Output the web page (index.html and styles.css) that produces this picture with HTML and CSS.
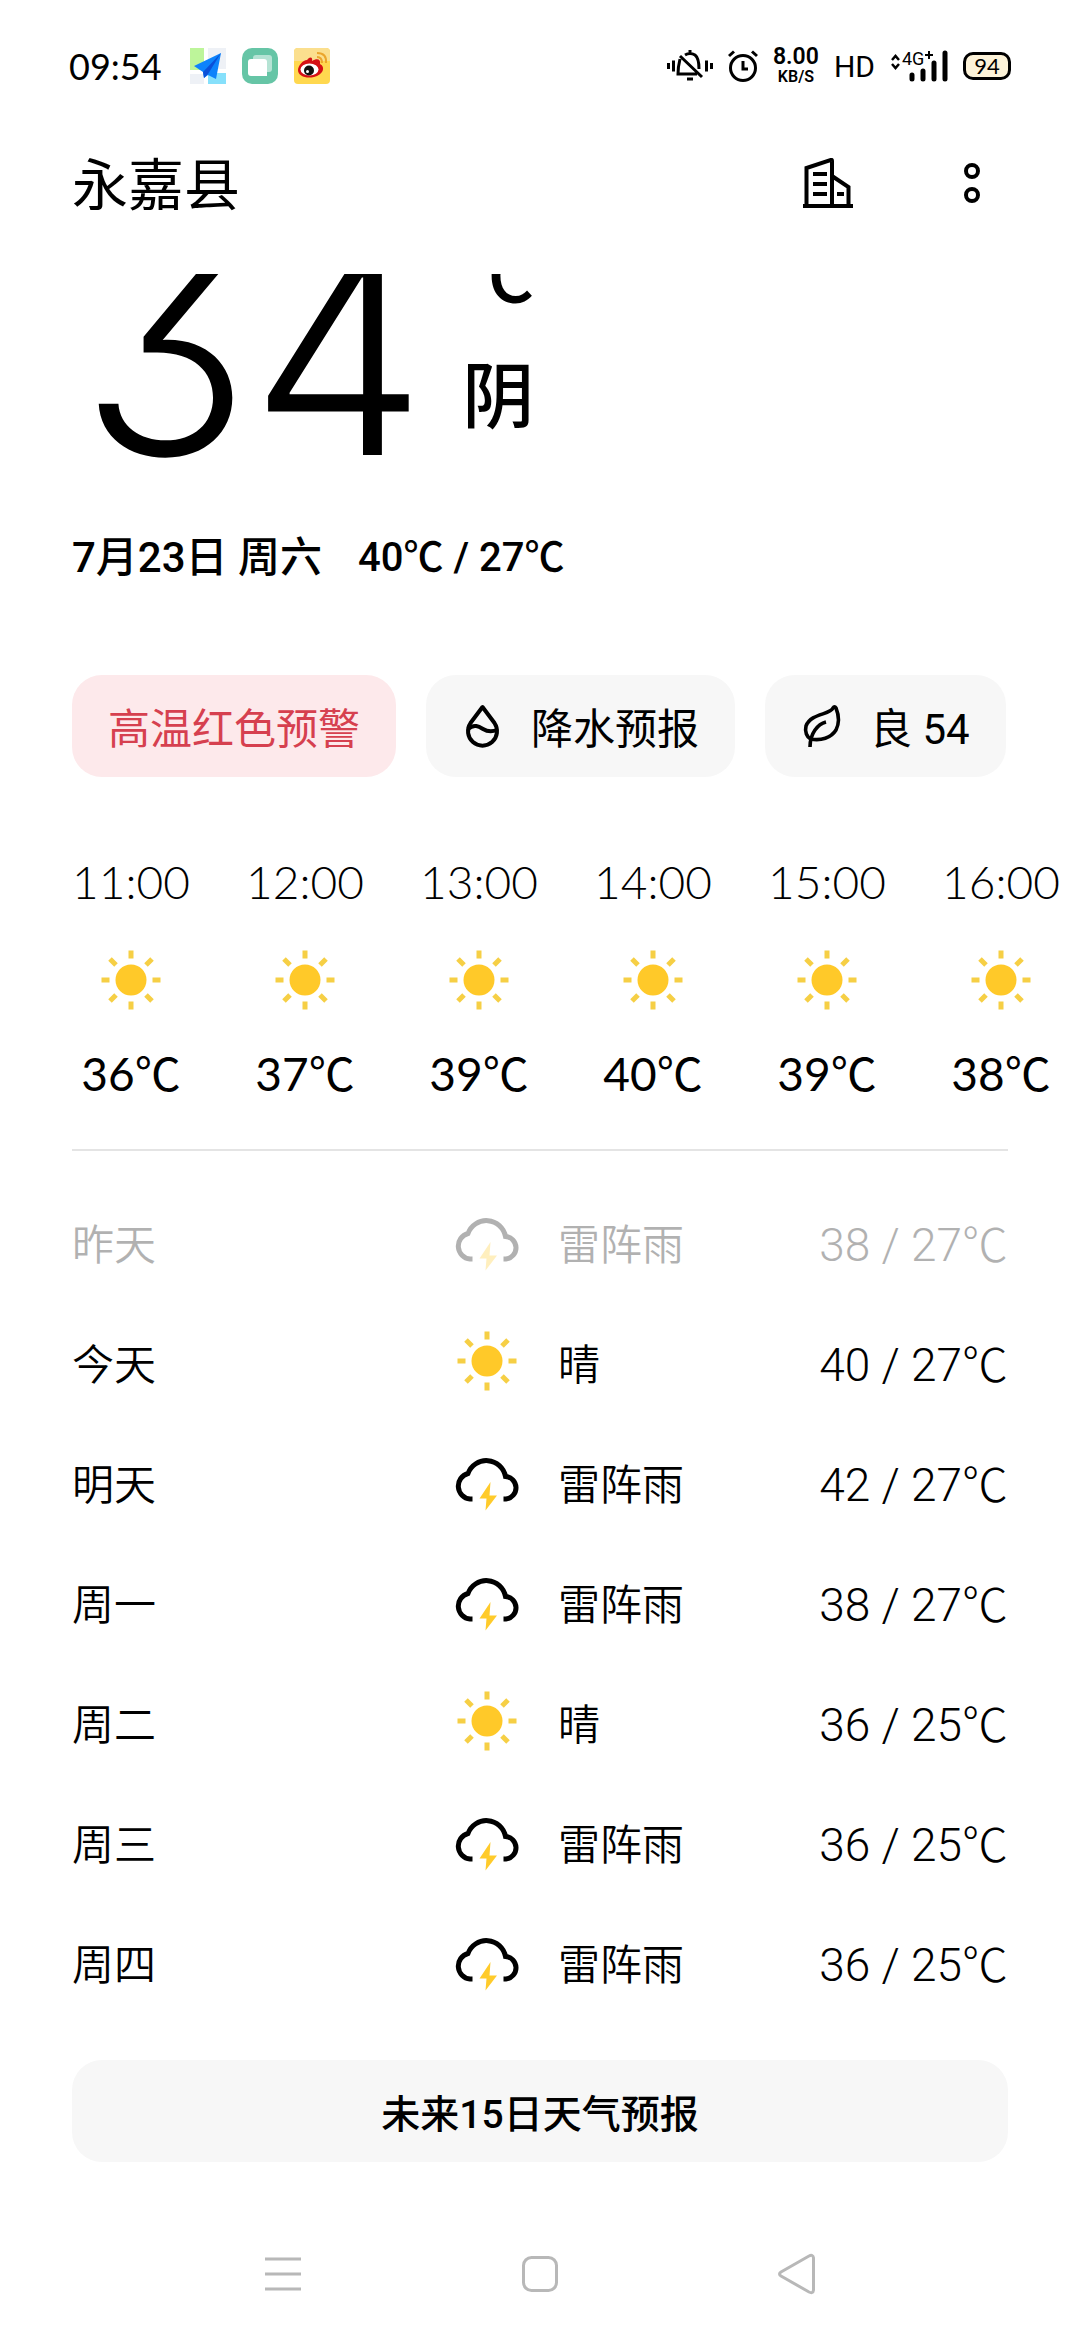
FILE: index.html
```html
<!DOCTYPE html>
<html lang="zh-CN">
<head>
  <meta charset="UTF-8">
  <meta name="viewport" content="width=device-width, initial-scale=1.0">
  <title>永嘉县 天气</title>
  <link rel="stylesheet" href="styles.css">
</head>
<body>
  <svg class="sprite" aria-hidden="true">
    <symbol id="sun" viewBox="0 0 60 60">
      <g stroke="#f6cf45" stroke-width="5">
        <path d="M30 0.5V8.5M30 51.5V59.5M0.5 30H8.5M51.5 30H59.5"/>
        <path d="M9 9L15 15M45 45L51 51M51 9L45 15M15 45L9 51"/>
      </g>
      <circle cx="30" cy="30" r="15.5" fill="#ffc929"/>
    </symbol>
    <symbol id="storm" viewBox="0 -4 66 60">
      <path d="M18.5 44H16A13 13 0 0 1 14 18.5A19.5 19.5 0 0 1 51.5 21.5A11.3 11.3 0 0 1 52 44H49.5" fill="none" stroke="currentColor" stroke-width="5"/>
      <path class="bolt" d="M36.5 27L25.5 43.5H32.5L31.5 55.5L43 40.5H35.5Z" fill="#ffcb2b"/>
    </symbol>
  </svg>

  <header class="status">
    <span class="clock">09:54</span>
    <div class="apps">
      <svg viewBox="0 0 36 36" width="36" height="36">
        <path d="M0 0H14V22H0Z" fill="#bdf59a"/>
        <path d="M18 0H36V21H18ZM0 26H14V36H0Z" fill="#eef1f6"/>
        <path d="M18 25H36V36H18Z" fill="#86e0fb"/>
        <path d="M31 5L4 18L13 24L14 30L18 27L26 31Z" fill="#0d83fb"/>
        <path d="M31 5L13 24L14 30L18 26Z" fill="#0a50d8"/>
      </svg>
      <svg viewBox="0 0 36 36" width="36" height="36">
        <rect width="36" height="36" rx="10" fill="#66c5a6"/>
        <rect x="11" y="7" width="19" height="17" rx="3" fill="#b5e3d4"/>
        <path d="M9 11H22Q25 11 25 14V28H9Q6 28 6 25V14Q6 11 9 11Z" fill="#fff"/>
      </svg>
      <svg viewBox="0 0 36 36" width="36" height="36">
        <rect width="36" height="36" rx="4" fill="#ffd84f"/>
        <path d="M4 0H32Q36 0 36 4V13H0V4Q0 0 4 0Z" fill="#fbdf8e"/>
        <path d="M13 12C16 8 19 9 18 13C23 10 27 11 26 16C32 19 29 27 20 29C12 31 4 28 4 22C4 18 9 12 13 12Z" fill="#d51015"/>
        <ellipse cx="15.500" cy="21.500" rx="9" ry="6" fill="#fff"/>
        <circle cx="15" cy="22.500" r="5" fill="#111"/>
        <circle cx="13.500" cy="23.500" r="1.500" fill="#fff"/>
        <path d="M23 9Q28 9 28 15M23 5Q33 5 32 15" fill="none" stroke="#eba52c" stroke-width="2"/>
      </svg>
    </div>
    <div class="system">
      <svg viewBox="0 0 46 32" width="46" height="32" fill="none" stroke="#000" stroke-width="3">
        <path d="M1.5 13V19M6.500 10.500V21.500M39.500 10.500V21.500M44.500 13V19"/>
        <path d="M13 9Q11 17 11 24H30M18 5Q23 2 28 5Q32 8 32 19M23 0V4M13 6L35 27"/>
        <path d="M20 29H26"/>
      </svg>
      <svg viewBox="0 0 30 32" width="30" height="32" fill="none" stroke="#000" stroke-width="3">
        <circle cx="15" cy="18" r="12.500"/>
        <path d="M15 11V19H20M1 6L6 1.500M29 6L24 1.500"/>
      </svg>
      <div class="speed"><span>8.00</span><small>KB/S</small></div>
      <span class="hd">HD</span>
      <div class="signal">
        <svg viewBox="0 0 58 32" width="58" height="32">
          <path d="M2 10L5.500 6L9 10M2 14L5.500 18L9 14" fill="none" stroke="#000" stroke-width="2.500"/>
          <path d="M39 1V9M35 5H43" stroke="#000" stroke-width="2"/>
          <path d="M22 25V29M33 21V29M44 13V29M55 3V29" stroke="#000" stroke-width="5" stroke-linecap="round"/>
        </svg>
        <span class="net">4G</span>
      </div>
      <span class="battery">94</span>
    </div>
  </header>

  <div class="appbar">
    <h1>永嘉县</h1>
    <div class="actions">
      <button type="button" aria-label="城市管理">
        <svg viewBox="0 0 50 50" width="50" height="50" fill="none" stroke="#000">
          <path d="M3.500 47V10L28 2Q29 1.500 29 3V47M29 18L45.500 29V47" stroke-width="4"/>
          <path d="M0 48H50M10 16H24M10 26H24M10 36H24M34 36H41" stroke-width="4"/>
        </svg>
      </button>
      <button type="button" aria-label="更多">
        <svg viewBox="0 0 18 42" width="18" height="42" fill="none" stroke="#000" stroke-width="4">
          <circle cx="9" cy="9" r="6"/>
          <circle cx="9" cy="33" r="6"/>
        </svg>
      </button>
    </div>
  </div>

  <main>
    <section class="now">
      <div class="degrees">34</div>
      <div class="sky"><span>℃</span><span>阴</span></div>
    </section>
    <p class="date"><span>7月23日 周六</span><span class="range">40℃ / 27℃</span></p>

    <div class="chips">
      <button type="button" class="chip alert">高温红色预警</button>
      <button type="button" class="chip">
        <svg viewBox="0 0 45 45" width="45" height="45" fill="none" stroke="#000" stroke-width="4">
          <path d="M20.500 4L8.500 20A14.500 14.500 0 1 0 32.500 20Z" stroke-linejoin="round"/>
          <path d="M6 26C12 20.500 17 23.500 21 26S30 29 35 27"/>
        </svg>
        降水预报
      </button>
      <button type="button" class="chip">
        <svg viewBox="0 0 45 45" width="45" height="45" fill="none" stroke="#000" stroke-width="3.600">
          <path d="M32 5C29 12 10 10 5 23C3.500 29 6 34 9.500 36C20 38 30 35 35 27C39 19 37 10 35 5Q33.500 2.500 32 5Z"/>
          <path d="M25 19C17 21 9 30 9 44"/>
        </svg>
        良 54
      </button>
    </div>

    <ul class="hours">
      <li><time>11:00</time><svg class="sun"><use href="#sun"/></svg><span>36℃</span></li>
      <li><time>12:00</time><svg class="sun"><use href="#sun"/></svg><span>37℃</span></li>
      <li><time>13:00</time><svg class="sun"><use href="#sun"/></svg><span>39℃</span></li>
      <li><time>14:00</time><svg class="sun"><use href="#sun"/></svg><span>40℃</span></li>
      <li><time>15:00</time><svg class="sun"><use href="#sun"/></svg><span>39℃</span></li>
      <li><time>16:00</time><svg class="sun"><use href="#sun"/></svg><span>38℃</span></li>
    </ul>

    <table class="days">
      <tr class="past"><th scope="row">昨天</th><td class="icon"><svg class="storm"><use href="#storm"/></svg></td><td>雷阵雨</td><td class="temp">38 / 27℃</td></tr>
      <tr><th scope="row">今天</th><td class="icon"><svg class="sun"><use href="#sun"/></svg></td><td>晴</td><td class="temp">40 / 27℃</td></tr>
      <tr><th scope="row">明天</th><td class="icon"><svg class="storm"><use href="#storm"/></svg></td><td>雷阵雨</td><td class="temp">42 / 27℃</td></tr>
      <tr><th scope="row">周一</th><td class="icon"><svg class="storm"><use href="#storm"/></svg></td><td>雷阵雨</td><td class="temp">38 / 27℃</td></tr>
      <tr><th scope="row">周二</th><td class="icon"><svg class="sun"><use href="#sun"/></svg></td><td>晴</td><td class="temp">36 / 25℃</td></tr>
      <tr><th scope="row">周三</th><td class="icon"><svg class="storm"><use href="#storm"/></svg></td><td>雷阵雨</td><td class="temp">36 / 25℃</td></tr>
      <tr><th scope="row">周四</th><td class="icon"><svg class="storm"><use href="#storm"/></svg></td><td>雷阵雨</td><td class="temp">36 / 25℃</td></tr>
    </table>

    <button type="button" class="more">未来15日天气预报</button>
  </main>

  <nav class="keys">
    <button type="button" aria-label="最近任务">
      <svg viewBox="0 0 40 42" width="40" height="42" fill="none" stroke="#b8b8b8" stroke-width="3">
        <path d="M2 6H38M2 21H38M2 36H38"/>
      </svg>
    </button>
    <button type="button" aria-label="主页">
      <svg viewBox="0 0 40 42" width="40" height="42" fill="none" stroke="#b8b8b8" stroke-width="3">
        <rect x="3.500" y="4.500" width="33" height="33" rx="8"/>
      </svg>
    </button>
    <button type="button" aria-label="返回">
      <svg viewBox="0 0 40 42" width="40" height="42" fill="none" stroke="#b8b8b8" stroke-width="3">
        <path d="M32 3Q36 1 36.500 5V37Q36 41 32 39L4 23Q1 21 4 19Z"/>
      </svg>
    </button>
  </nav>
</body>
</html>
```
FILE: styles.css
```css
:root {
  --num: Lato, "Noto Sans CJK SC", sans-serif;
  --text: Roboto, "Noto Sans CJK SC", sans-serif;
  --chip: #f7f7f7;
}
* { box-sizing: border-box; }
body {
  margin: 0;
  min-height: 100vh;
  background: #fff;
  color: #000;
  font-family: var(--text);
  font-size: 42px;
  overflow-x: hidden;
}
button {
  border: 0; padding: 0;
  background: none;
  color: inherit;
  font: inherit;
}
svg { display: block; flex: none; }
.sprite { position: absolute; width: 0; height: 0; }

/* status bar */
.status {
  display: flex; align-items: center;
  height: 132px;
  padding: 0 69px;
}
.clock { font-family: var(--num); font-size: 36px; }
.apps { display: flex; gap: 16px; margin-left: 28px; }
.system { display: flex; align-items: center; gap: 15px; margin-left: auto; }
.speed {
  display: flex; flex-direction: column; align-items: center;
  font-size: 23px; font-weight: 600; line-height: 22px;
}
.speed small { font-size: 16px; line-height: 18px; }
.hd { font-size: 30px; }
.signal { position: relative; }
.net {
  position: absolute; left: 12px; top: 0;
  font-size: 18px; line-height: 18px;
}
.battery {
  width: 48px; height: 28px;
  border: 3px solid #000; border-radius: 10px;
  background: #fdf3d9;
  font-family: var(--num); font-size: 22px;
  line-height: 22px; text-align: center;
}

/* title */
.appbar {
  display: flex; justify-content: space-between; align-items: center;
  height: 102px;
  padding: 0 99px 0 72px;
}
h1 { margin: 0; padding-top: 6px; font-size: 56px; font-weight: 400; line-height: 60px; }
.actions { display: flex; align-items: center; gap: 110px; }

main { padding: 40px 72px 0; }
.now {
  display: flex; align-items: flex-end;
  height: 200px;
  overflow: hidden;
}
.degrees {
  padding-left: 8px;
  font-family: Inter, sans-serif;
  font-feature-settings: "cv09";
  font-size: 280px; font-weight: 300; line-height: 240px;
}
.sky {
  display: flex; flex-direction: column;
  margin-left: 36px; padding-bottom: 16px;
  font-size: 72px; font-weight: 500; line-height: 120px;
}
.date {
  display: flex; gap: 36px;
  margin: 54px 0 0;
  font-weight: 500; line-height: 60px;
}
.range { font-size: 40px; }

.chips { display: flex; gap: 30px; margin-top: 87px; }
.chip {
  display: flex; align-items: center; gap: 24px;
  height: 102px;
  padding: 0 36px 2px;
  border-radius: 30px;
  background: var(--chip);
  white-space: nowrap;
}
.alert { background: #fde9eb; color: #d6404f; }

/* hourly forecast, runs past the right edge */
.hours {
  display: flex; gap: 56px;
  margin: 75px -72px 0 0; padding: 0 0 45px;
  list-style: none;
  overflow: hidden;
  font-family: var(--num);
  font-size: 46px; line-height: 60px;
}
.hours li {
  display: flex; flex-direction: column; align-items: center;
  flex: 0 0 118px; min-width: 0;
}
.hours time { font-weight: 300; }
.hours .sun { margin: 38px 0 34px; }
.sun { width: 60px; height: 60px; }
.storm { width: 66px; height: 60px; }

.days {
  width: 100%;
  border-top: 2px solid #e4e4e4;
  border-collapse: separate; border-spacing: 0;
  padding-top: 32px;
  table-layout: fixed;
}
.days th, .days td { height: 120px; padding: 0 0 4px; text-align: left; font-weight: 350; }
.days th { width: 382px; }
.days .icon { width: 104px; }
.days .sun { margin-left: 3px; }
.days .temp {
  font-size: 46px; font-weight: 300;
  text-align: right;
  white-space: nowrap;
}
.past { opacity: 0.3; }

.more {
  display: block;
  width: 100%; height: 102px;
  margin-top: 37px;
  border-radius: 30px;
  background: var(--chip);
  font-size: 39px; font-weight: 500;
}

/* navigation keys */
.keys {
  display: flex; justify-content: center; align-items: center;
  gap: 217px;
  height: 120px;
  margin-top: 52px;
}
```
